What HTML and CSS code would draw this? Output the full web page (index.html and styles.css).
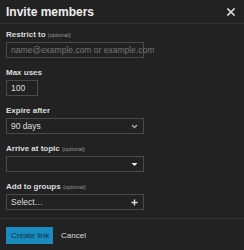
FILE: index.html
```html
<!DOCTYPE html>
<html>
<head>
<meta charset="utf-8">
<link rel="stylesheet" href="styles.css">
</head>
<body>
<div class="modal">
  <div class="header">
    <h1 class="title">Invite members</h1>
    <button class="close" aria-label="Close">
      <svg width="8" height="8" viewBox="0 0 8 8"><path d="M1 1L7 7M7 1L1 7" stroke="#dddddd" stroke-width="1.6" stroke-linecap="square"/></svg>
    </button>
  </div>
  <div class="body">
    <div class="field">
      <div class="label">Restrict to <span class="opt">(optional)</span></div>
      <div class="control wide"><span class="placeholder">name@example.com or example.com</span></div>
    </div>
    <div class="field">
      <div class="label">Max uses</div>
      <div class="control narrow"><span class="value">100</span></div>
    </div>
    <div class="field">
      <div class="label">Expire after</div>
      <div class="control wide select"><span class="value">90 days</span>
        <svg class="icon" width="7" height="5" viewBox="0 0 7 5"><path d="M1 1L3.5 3.5L6 1" stroke="#aaaaaa" stroke-width="1.4" fill="none"/></svg>
      </div>
    </div>
    <div class="field">
      <div class="label">Arrive at topic <span class="opt">(optional)</span></div>
      <div class="control wide select"><span class="value"></span>
        <svg class="icon" width="7" height="5" viewBox="0 0 7 5"><path d="M0.5 1H6.5L3.5 4Z" fill="#eeeeee"/></svg>
      </div>
    </div>
    <div class="field">
      <div class="label">Add to groups <span class="opt">(optional)</span></div>
      <div class="control wide select"><span class="value">Select…</span>
        <svg class="icon" width="7" height="7" viewBox="0 0 7 7"><path d="M3.5 0.5V6.5M0.5 3.5H6.5" stroke="#dddddd" stroke-width="1.4"/></svg>
      </div>
    </div>
  </div>
  <div class="footer">
    <button class="btn primary">Create link</button>
    <button class="btn flat">Cancel</button>
  </div>
</div>
</body>
</html>
```

FILE: styles.css
```css
html, body {
  margin: 0;
  padding: 0;
  background: #222222;
}
body {
  font-family: "Liberation Sans", Arial, sans-serif;
  color: #dddddd;
  width: 244px;
  height: 250px;
  overflow: hidden;
}
.modal {
  display: flex;
  flex-direction: column;
}
.header {
  display: flex;
  align-items: center;
  justify-content: space-between;
  height: 23px;
  padding: 0 9px 0 6px;
  border-bottom: 1px solid #333333;
}
.title {
  margin: 0;
  font-size: 12px;
  font-weight: bold;
  color: #eeeeee;
  line-height: 20px;
}
.close {
  background: none;
  border: none;
  padding: 0;
  width: 8px;
  height: 8px;
  display: flex;
}
.body {
  padding: 6px 6px 0 6px;
  display: flex;
  flex-direction: column;
}
.field {
  display: flex;
  flex-direction: column;
  margin-bottom: 10px;
}
.label {
  font-size: 8px;
  font-weight: bold;
  line-height: 10px;
  height: 10px;
  margin-bottom: 2px;
  color: #dddddd;
}
.opt {
  font-size: 5.5px;
  font-weight: normal;
  color: #999999;
}
.control {
  box-sizing: border-box;
  height: 16px;
  border: 1px solid #4a4a4a;
  display: flex;
  align-items: center;
  padding: 0 4px;
  font-size: 8.5px;
}
.wide { width: 138px; }
.narrow { width: 32px; }
.select {
  justify-content: space-between;
  padding-right: 5px;
}
.placeholder { color: #777777; white-space: nowrap; }
.value { color: #dddddd; }
.footer {
  border-top: 1px solid #333333;
  margin-top: -2px;
  padding: 8px 6px;
  display: flex;
  align-items: center;
  gap: 2px;
}
.btn {
  font-family: "Liberation Sans", Arial, sans-serif;
  font-size: 8px;
  border: none;
  height: 17px;
  padding: 0 5px;
  white-space: nowrap;
}
.primary {
  background: #1a8bbf;
  color: #0d3548;
  width: 47px;
}
.flat {
  background: none;
  color: #dddddd;
  padding: 0 6px;
}
```
